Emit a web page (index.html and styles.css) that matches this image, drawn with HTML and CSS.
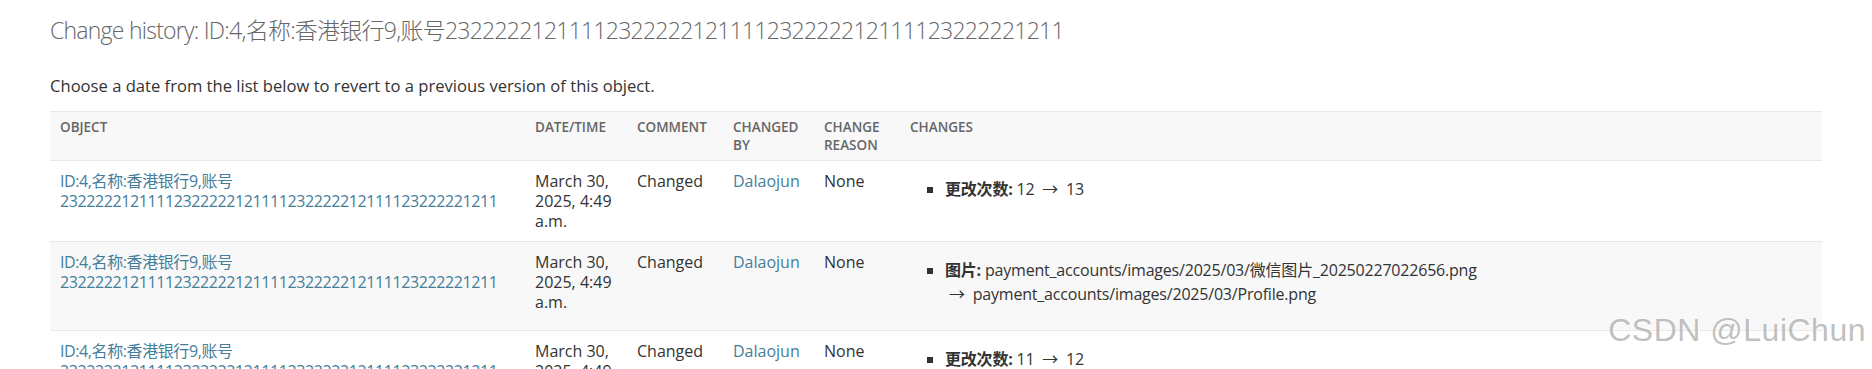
FILE: index.html
```html
<!DOCTYPE html>
<html lang="en">
<head>
  <meta charset="UTF-8" />
  <title>Change history</title>
  <link rel="stylesheet" href="styles.css">
</head>
<body>
  <div class="content">
    <h1>Change history: ID:4,名称:香港银行9,账号23222221211112322222121111232222212111123222221211</h1>
    <p class="help">Choose a date from the list below to revert to a previous version of this object.</p>

    <table class="history">
      <colgroup>
        <col class="c-object">
        <col class="c-date">
        <col class="c-comment">
        <col class="c-user">
        <col class="c-reason">
        <col>
      </colgroup>
      <thead>
        <tr>
          <th>Object</th>
          <th>Date/time</th>
          <th>Comment</th>
          <th>Changed by</th>
          <th>Change reason</th>
          <th>Changes</th>
        </tr>
      </thead>
      <tbody>
        <tr>
          <td><a class="obj" href="#">ID:4,名称:香港银行9,账号<br>23222221211112322222121111232222212111123222221211</a></td>
          <td>March 30, 2025, 4:49 a.m.</td>
          <td>Changed</td>
          <td><a href="#">Dalaojun</a></td>
          <td>None</td>
          <td>
            <ul class="changes">
              <li><strong>更改次数:</strong> 12 &nbsp;&rarr;&nbsp; 13</li>
            </ul>
          </td>
        </tr>
        <tr>
          <td><a class="obj" href="#">ID:4,名称:香港银行9,账号<br>23222221211112322222121111232222212111123222221211</a></td>
          <td>March 30, 2025, 4:49 a.m.</td>
          <td>Changed</td>
          <td><a href="#">Dalaojun</a></td>
          <td>None</td>
          <td>
            <ul class="changes">
              <li><strong>图片:</strong> payment_accounts/images/2025/03/微信图片_20250227022656.png<br>&nbsp;&rarr;&nbsp; payment_accounts/images/2025/03/Profile.png</li>
            </ul>
          </td>
        </tr>
        <tr>
          <td><a class="obj" href="#">ID:4,名称:香港银行9,账号<br>23222221211112322222121111232222212111123222221211</a></td>
          <td>March 30, 2025, 4:49 a.m.</td>
          <td>Changed</td>
          <td><a href="#">Dalaojun</a></td>
          <td>None</td>
          <td>
            <ul class="changes">
              <li><strong>更改次数:</strong> 11 &nbsp;&rarr;&nbsp; 12</li>
            </ul>
          </td>
        </tr>
      </tbody>
    </table>
  </div>

  <div class="watermark">CSDN @LuiChun</div>
</body>
</html>
```

FILE: styles.css
```css
body {
  margin: 0;
  background: #fff;
  color: #333;
  font-family: "Open Sans", "Noto Sans CJK SC", sans-serif;
  font-size: 16px;
  overflow: hidden;
}

a {
  color: #447e9b;
  text-decoration: none;
}

.content {
  padding: 0 50px;
}

h1 {
  margin: 15px 0 0;
  font-size: 23px;
  line-height: 30px;
  font-weight: 300;
  letter-spacing: -0.75px;
  color: #666;
}

.help {
  margin: 31px 0 15px;
  font-size: 16.6px;
  line-height: 20px;
}

.history {
  width: 100%;
  border-collapse: collapse;
  table-layout: fixed;
}

.c-object { width: 475px; }
.c-date { width: 102px; }
.c-comment { width: 96px; }
.c-user { width: 91px; }
.c-reason { width: 86px; }

.history th {
  padding: 6px 10px;
  background: #f8f8f8;
  border-top: 1px solid #e8e8e8;
  border-bottom: 1px solid #e8e8e8;
  color: #666;
  font-size: 13.5px;
  font-weight: 600;
  line-height: 18px;
  text-align: left;
  text-transform: uppercase;
  vertical-align: top;
}

.history td {
  padding: 10px;
  border-bottom: 1px solid #e8e8e8;
  font-size: 16px;
  line-height: 20px;
  vertical-align: top;
}

.history .obj {
  letter-spacing: -0.4px;
}

.history tbody tr:nth-child(even) {
  background: #f8f8f8;
}

.changes {
  margin: 5px 0 13px;
  padding-left: 35px;
}

.changes li {
  list-style-type: square;
  padding: 1px 0;
  line-height: 24px;
  letter-spacing: -0.2px;
}

.changes strong {
  font-weight: 700;
}

.watermark {
  position: absolute;
  right: 6px;
  top: 312px;
  font-family: "Liberation Sans", Arial, sans-serif;
  font-size: 32px;
  color: rgba(150, 150, 150, 0.6);
  text-shadow: 1px 1px 1px rgba(255, 255, 255, 0.8);
  letter-spacing: 0.5px;
}
```
